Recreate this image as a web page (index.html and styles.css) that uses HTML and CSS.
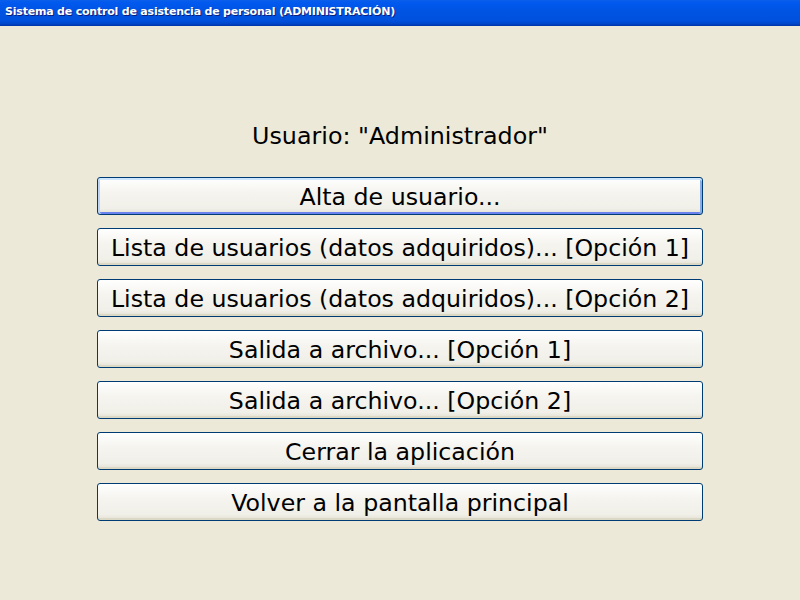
FILE: index.html
```html
<!DOCTYPE html>
<html lang="es">
<head>
<meta charset="utf-8">
<title>Sistema de control de asistencia de personal</title>
<link rel="stylesheet" href="styles.css">
</head>
<body>
<div class="window">
  <div class="titlebar">Sistema de control de asistencia de personal (ADMINISTRACIÓN)</div>
  <div class="content">
    <div class="user">Usuario: "Administrador"</div>
    <div class="buttons">
      <button class="btn focused">Alta de usuario...</button>
      <button class="btn">Lista de usuarios (datos adquiridos)... [Opción 1]</button>
      <button class="btn">Lista de usuarios (datos adquiridos)... [Opción 2]</button>
      <button class="btn">Salida a archivo... [Opción 1]</button>
      <button class="btn">Salida a archivo... [Opción 2]</button>
      <button class="btn">Cerrar la aplicación</button>
      <button class="btn">Volver a la pantalla principal</button>
    </div>
  </div>
</div>
</body>
</html>
```
FILE: styles.css
```css
html, body {
  margin: 0;
  padding: 0;
  width: 800px;
  height: 600px;
  overflow: hidden;
  background: #ECE9D8;
  font-family: "DejaVu Sans", sans-serif;
}
.window {
  display: flex;
  flex-direction: column;
  height: 600px;
}
.titlebar {
  height: 26px;
  box-sizing: border-box;
  padding: 5px 0 0 5px;
  color: #fff;
  font-size: 11px;
  letter-spacing: -0.2px;
  font-weight: bold;
  background: linear-gradient(to bottom, #0A5FEA 0%, #0058EE 12%, #0054E3 40%, #0050DD 80%, #0046C8 92%, #0033A8 100%);
  text-shadow: 1px 1px 0 #0A1E7A;
  white-space: nowrap;
}
.content {
  display: flex;
  flex-direction: column;
  align-items: center;
  padding-top: 96px;
}
.user {
  font-size: 23.8px;
  color: #000;
  height: 28px;
  line-height: 28px;
  margin-bottom: 27px;
}
.buttons {
  display: flex;
  flex-direction: column;
  gap: 13px;
}
.btn {
  width: 606px;
  height: 38px;
  box-sizing: border-box;
  border: 1px solid #003C74;
  border-radius: 3px;
  background: linear-gradient(to bottom, #FFFFFF 0%, #F5F4EF 40%, #F0EFE8 85%, #E3E0D2 100%);
  font-family: "DejaVu Sans", sans-serif;
  font-size: 23.7px;
  color: #000;
  padding: 2px 0 0 0;
  line-height: 34px;
  box-shadow: inset 0 -2px 0 #DCD8C6;
}
.btn.focused {
  box-shadow: inset 0 2px 0 #CEE7FF, inset 2px 0 0 #BCD4F6, inset -2px 0 0 #89ADE4, inset 0 -2px 0 #6982EE;
}
```
